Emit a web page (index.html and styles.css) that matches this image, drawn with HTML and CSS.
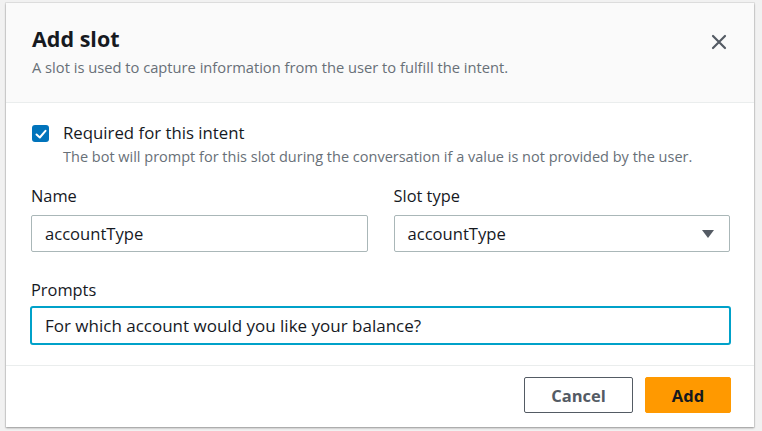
FILE: index.html
```html
<!DOCTYPE html>
<html lang="en">
<head>
<meta charset="utf-8">
<title>Add slot</title>
<link rel="stylesheet" href="styles.css">
</head>
<body>
<div class="modal">
  <div class="modal-header">
    <div class="header-text">
      <h2 class="title">Add slot</h2>
      <p class="subtitle">A slot is used to capture information from the user to fulfill the intent.</p>
    </div>
    <button class="close" aria-label="Close">
      <svg width="16" height="16" viewBox="0 0 16 16"><path d="M2 2 L14 14 M14 2 L2 14" stroke="#545b64" stroke-width="2.2" fill="none" stroke-linecap="round"/></svg>
    </button>
  </div>
  <div class="modal-body">
    <div class="check-row">
      <span class="checkbox">
        <svg width="16" height="16" viewBox="0 0 16 16"><path d="M3.5 8.5 L6.8 11.5 L12.5 4.8" stroke="#fff" stroke-width="2" fill="none" stroke-linecap="round" stroke-linejoin="round"/></svg>
      </span>
      <div class="check-text">
        <div class="check-label">Required for this intent</div>
        <div class="check-desc">The bot will prompt for this slot during the conversation if a value is not provided by the user.</div>
      </div>
    </div>
    <div class="field-grid">
      <div class="field">
        <label class="label">Name</label>
        <div class="input">accountType</div>
      </div>
      <div class="field">
        <label class="label">Slot type</label>
        <div class="input select">
          <span>accountType</span>
          <svg width="14" height="10" viewBox="0 0 14 10"><path d="M1 1 L13 1 L7 9 Z" fill="#545b64"/></svg>
        </div>
      </div>
    </div>
    <div class="field prompts">
      <label class="label">Prompts</label>
      <div class="input focused">For which account would you like your balance?</div>
    </div>
  </div>
  <div class="modal-footer">
    <button class="btn btn-cancel">Cancel</button>
    <button class="btn btn-primary">Add</button>
  </div>
</div>
</body>
</html>
```
FILE: styles.css
```css
* { box-sizing: border-box; }
html, body { margin: 0; padding: 0; }
body {
  width: 762px;
  height: 431px;
  background: #f1f1f1;
  font-family: "Open Sans", "Liberation Sans", Arial, sans-serif;
  color: #16191f;
  padding: 3px 8px 0 6px;
  overflow: hidden;
}
.modal {
  width: 748px;
  height: 424px;
  background: #fff;
  box-shadow: 0 1px 2px rgba(0,0,0,0.35), 0 0 0 1px rgba(0,0,0,0.06);
  display: flex;
  flex-direction: column;
}
.modal-header {
  background: #fafafa;
  border-bottom: 1px solid #eaeded;
  height: 100px;
  padding: 23px 24px 0 26px;
  display: flex;
  justify-content: space-between;
  align-items: flex-start;
}
.title {
  margin: 0;
  font-size: 21.5px;
  line-height: 26px;
  font-weight: 700;
  color: #16191f;
}
.subtitle {
  margin: 5px 0 0;
  font-size: 14.7px;
  line-height: 20px;
  color: #687078;
}
.close {
  border: 0;
  background: transparent;
  padding: 0;
  margin: 8px 3px 0 0;
  width: 16px;
  height: 16px;
  display: flex;
}
.modal-body {
  flex: 1;
  padding: 20px 24px 0 25px;
  border-bottom: 1px solid #eaeded;
}
.check-row {
  display: flex;
  gap: 14px;
  align-items: flex-start;
}
.checkbox {
  width: 17px;
  height: 17px;
  background: #0073bb;
  border-radius: 3px;
  margin: 2px 0 0 1px;
  display: flex;
  align-items: center;
  justify-content: center;
  flex: none;
}
.check-label {
  font-size: 16.8px;
  line-height: 20px;
}
.check-desc {
  font-size: 14.5px;
  line-height: 18px;
  margin-top: 5px;
  color: #687078;
}
.field-grid {
  display: grid;
  grid-template-columns: 1fr 1fr;
  gap: 26px;
  margin-top: 19px;
}
.field {
  display: flex;
  flex-direction: column;
}
.label {
  font-size: 16.4px;
  line-height: 22px;
  margin-bottom: 8px;
}
.input {
  height: 37px;
  border: 1px solid #aab7b8;
  border-radius: 2px;
  padding: 0 13px;
  display: flex;
  align-items: center;
  font-size: 16.6px;
  color: #16191f;
}
.select {
  justify-content: space-between;
  padding-right: 14px;
}
.prompts {
  margin-top: 27px;
}
.prompts .label { margin-bottom: 5px; }
.focused {
  height: 39px;
  border: 2px solid #00a1c9;
  border-radius: 3px;
  margin-left: -1px;
  margin-right: -1px;
  font-size: 17px;
}
.modal-footer {
  height: 61px;
  display: flex;
  justify-content: flex-end;
  align-items: flex-start;
  gap: 12px;
  padding: 11px 23px 0 0;
}
.btn {
  height: 36px;
  border-radius: 2px;
  font-family: inherit;
  font-size: 16.5px;
  font-weight: 700;
  padding: 0;
  cursor: pointer;
}
.btn-cancel {
  width: 109px;
  background: #fff;
  border: 1px solid #545b64;
  color: #545b64;
}
.btn-primary {
  width: 86px;
  background: #ff9900;
  border: 1px solid #ff9900;
  color: #16191f;
}
```
